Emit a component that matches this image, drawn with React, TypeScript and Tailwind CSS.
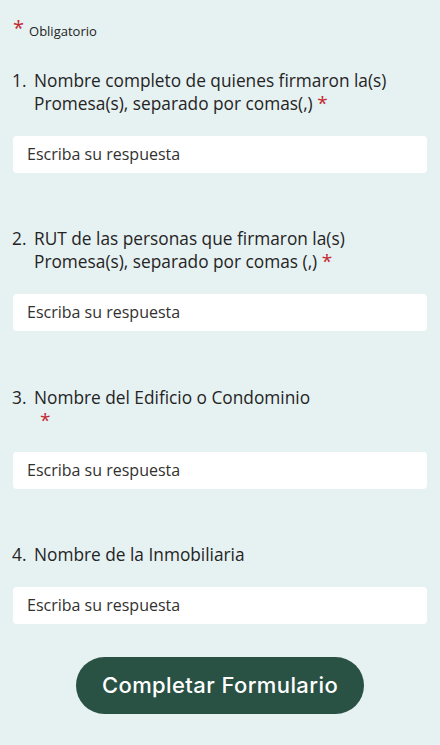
import React from "react";

const Star = ({ className = "" }: { className?: string }) => (
  <span className={"text-[#c4262e] text-[19px] leading-[19px] " + className}>*</span>
);

const Input = () => (
  <div className="mx-[13px] h-[37px] rounded-[4px] bg-white flex items-center pl-[14px] text-[16px] text-[#323130]">
    Escriba su respuesta
  </div>
);

export default function App() {
  return (
    <div
      className="w-[440px] h-[745px] overflow-hidden bg-[#e6f1f2] text-[#242424] [font-variant-ligatures:none]"
      style={{ fontFamily: "'Open Sans', 'Noto Sans', sans-serif" }}
    >
      <div className="pt-[18px] pl-[13px] flex items-start text-[13px]">
        <span className="text-[#c4262e] text-[20px] leading-[20px] mr-[5px]">*</span>
        <span className="pt-[4px]">Obligatorio</span>
      </div>

      <div className="mt-[27px] pl-[12px] pr-[10px] flex text-[17.3px] leading-[23px]">
        <span className="w-[22px] shrink-0">1.</span>
        <span>
          Nombre completo de quienes firmaron la(s) Promesa(s), separado por comas(,) <Star />
        </span>
      </div>
      <div className="mt-[21px]">
        <Input />
      </div>

      <div className="mt-[54px] pl-[12px] pr-[10px] flex text-[17.3px] leading-[23px]">
        <span className="w-[22px] shrink-0">2.</span>
        <span className="w-[360px]">
          RUT de las personas que firmaron la(s) Promesa(s), separado por comas (,) <Star />
        </span>
      </div>
      <div className="mt-[21px]">
        <Input />
      </div>

      <div className="mt-[55px] pl-[12px] pr-[10px] flex text-[17.3px] leading-[23px]">
        <span className="w-[22px] shrink-0">3.</span>
        <span>
          Nombre del Edificio o Condominio
          <span className="block pl-[6px] h-[23px]">
            <Star />
          </span>
        </span>
      </div>
      <div className="mt-[20px]">
        <Input />
      </div>

      <div className="mt-[54px] pl-[12px] pr-[10px] flex text-[17.3px] leading-[23px]">
        <span className="w-[22px] shrink-0">4.</span>
        <span>Nombre de la Inmobiliaria</span>
      </div>
      <div className="mt-[21px]">
        <Input />
      </div>

      <div className="mt-[33px] flex justify-center">
        <div
          className="w-[288px] h-[57px] rounded-full bg-[#2a5244] text-white flex items-center justify-center text-[22px] font-medium tracking-[0.4px]"
          style={{ fontFamily: "Inter, sans-serif" }}
        >
          Completar Formulario
        </div>
      </div>
    </div>
  );
}
